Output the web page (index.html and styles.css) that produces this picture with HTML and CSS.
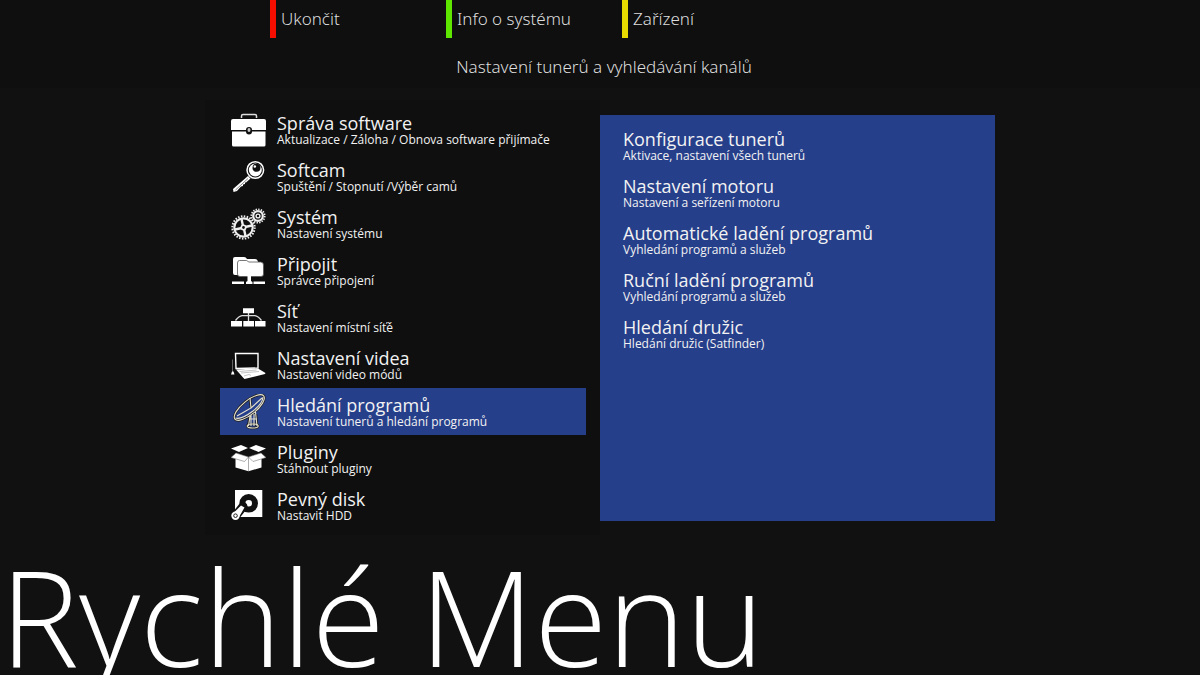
FILE: index.html
```html
<!DOCTYPE html>
<html lang="cs">
<head>
<meta charset="utf-8">
<title>Rychlé Menu</title>
<link rel="stylesheet" href="styles.css">
</head>
<body>
<header class="top">
  <div class="color-keys">
    <button class="key key-red" type="button">Ukončit</button>
    <button class="key key-green" type="button">Info o systému</button>
    <button class="key key-yellow" type="button">Zařízení</button>
  </div>
  <p class="hint">Nastavení tunerů a vyhledávání kanálů</p>
</header>
<main class="panels">
  <nav class="menu" aria-label="Rychlé Menu">
    <button class="item" type="button">
      <svg class="icon" viewBox="0 0 36 36" aria-hidden="true"><path d="M10.500 6V4q0-1.500 1.500-1.500h12q1.500 0 1.500 1.500v2" fill="none" stroke="#ddd" stroke-width="1.500"/><path fill="#fff" d="M2 7h31q2 0 2 2v9H21a3 3 0 0 0-6 0H0V9q0-2 2-2zM1 19.500h14a3 3 0 0 0 6 0h13.500V33q0 1.500-1.500 1.500H2.500Q1 34.500 1 33z"/><ellipse cx="18" cy="18" rx="1.500" ry="2" fill="#ccc"/></svg>
      <span class="text"><span class="name">Správa software</span><span class="desc">Aktualizace / Záloha / Obnova software přijímače</span></span>
    </button>
    <button class="item" type="button">
      <svg class="icon" viewBox="0 0 36 36" aria-hidden="true"><path d="M17 17L19.500 19.500L15 23.500L14 23.500L14 25L12 25.500L12 27L10 27.500L6 32L2.500 33L2 30z" fill="#fff"/><path d="M17 19.500L4.500 31" stroke="#333" stroke-width=".6"/><circle cx="24.300" cy="11" r="8.300" fill="#111" stroke="#fff" stroke-width="1.500"/><circle cx="24.300" cy="11" r="6.500" fill="#fff"/><circle cx="25.500" cy="8.800" r="4" fill="#111"/><circle cx="23.800" cy="7.500" r="1.300" fill="#fff"/></svg>
      <span class="text"><span class="name">Softcam</span><span class="desc">Spuštění / Stopnutí /Výběr camů</span></span>
    </button>
    <button class="item" type="button">
      <svg class="icon" viewBox="0 0 36 36" aria-hidden="true"><g fill="none" stroke="#eee"><circle cx="12.500" cy="21.500" r="11.200" stroke-width="2" stroke-dasharray="1.500 1.430"/><circle cx="12.500" cy="21.500" r="9.200" stroke-width="2.200"/><path d="M10.500 13L12 20M14.500 30L13 23M4 23.500L11 22M21 19.500L14 21" stroke-width="2.400"/><circle cx="12.500" cy="21.500" r="2.200" stroke-width="1.600"/><circle cx="27" cy="10" r="6.700" stroke-width="1.700" stroke-dasharray="1.400 1.230"/><circle cx="27" cy="10" r="4.800" stroke-width="2.200"/><circle cx="27" cy="10" r="1.900" stroke-width="1.400"/></g></svg>
      <span class="text"><span class="name">Systém</span><span class="desc">Nastavení systému</span></span>
    </button>
    <button class="item" type="button">
      <svg class="icon" viewBox="0 0 36 36" aria-hidden="true"><path fill="#fff" d="M4 4h9q2 0 3 2h8q2.500 0 3 3v13H4q-2 0-2-2V6q0-2 2-2z"/><path fill="#fff" stroke="#555" stroke-width=".8" d="M8.500 7.500h7q1 0 2 1.500h12q3 0 3 3v9q0 2.500-2.500 2.500H9q-2.500 0-2.500-2.500V10q0-2.500 2-2.500z"/><path fill="#fff" d="M1 28.500h12v2.500H1zM22.500 28.500h11.500v2.500H22.500zM16.500 23h3.500v5l1.500 1v2h-6.500v-2l1.500-1z"/></svg>
      <span class="text"><span class="name">Připojit</span><span class="desc">Správce připojení</span></span>
    </button>
    <button class="item" type="button">
      <svg class="icon" viewBox="0 0 36 36" aria-hidden="true"><path fill="#fff" d="M12 8.300h11v5H12zM0 21h11v5.500H0zM12.300 21h10.700v5.500H12.300zM24 21h10.500v5.500H24z"/><path d="M17.500 13v8M4.500 20.500Q8 16 11 15.700H24Q27 16 30.500 20.500" fill="none" stroke="#ddd" stroke-width="1.300"/></svg>
      <span class="text"><span class="name">Síť</span><span class="desc">Nastavení místní síťě</span></span>
    </button>
    <button class="item" type="button">
      <svg class="icon" viewBox="0 0 36 36" aria-hidden="true"><path d="M4.500 6.500L27 6.500L27 21L5 21.500z" fill="#0c0c0c" stroke="#fff" stroke-width="1.400"/><path fill="#fff" d="M5 22.500L27 21.500L34.500 26L34 27L13.500 32L12 30.500z"/><path d="M8.500 24.500L25.500 23M10 26L28 24.500M13 29L18 27.500L20 28.500" fill="none" stroke="#aaa" stroke-width=".7"/><path d="M1.500 12.500V25" stroke="#777" stroke-width=".8"/><path d="M0 27.500l1-3h1.500l1 3z" fill="#fff"/></svg>
      <span class="text"><span class="name">Nastavení videa</span><span class="desc">Nastavení video módů</span></span>
    </button>
    <button class="item item-active" type="button" aria-current="true">
      <svg class="icon" viewBox="0 0 36 36" aria-hidden="true"><g fill="none" stroke="#222" stroke-width="2.600"><ellipse cx="18.300" cy="13.500" rx="18.500" ry="7" transform="rotate(-39 18.300 13.500)"/><path d="M19 22L17 32M25 20L26 32M19 4L20 14"/><ellipse cx="21.700" cy="32" rx="5.500" ry="2"/></g><g fill="none" stroke="#e6e2d0" stroke-width="1.100"><ellipse cx="18.300" cy="13.500" rx="18.500" ry="7" transform="rotate(-39 18.300 13.500)"/><path d="M4.500 24Q10 26 22 17Q32 9 32 3M19 4L20 14L6 22M20 14L31 4M19 22L17.500 32M24.500 18L26 32M20 21v11M23 20v12M18 25h8"/><ellipse cx="21.700" cy="32" rx="5.500" ry="2"/></g></svg>
      <span class="text"><span class="name">Hledání programů</span><span class="desc">Nastavení tunerů a hledání programů</span></span>
    </button>
    <button class="item" type="button">
      <svg class="icon" viewBox="0 0 36 36" aria-hidden="true"><g fill="#fff"><path d="M0 7.500L10 4L17 7L8 11zM18 7L25 4L35 7.500L27.500 11z"/><path d="M4.500 12.500L17.500 16.500L30.500 12.500V26.500L17.500 30.300L4.500 26.500z"/></g><path d="M8 11.500L17.500 8L27.500 11.500L17.500 16z" fill="#111"/><g fill="#fff" stroke="#777" stroke-width=".6"><path d="M0 16.500L5 12L17.500 16L13.500 20.500zM17.500 16L30 12L35 16.500L22 20.500z"/><path d="M17.500 17v13"/></g></svg>
      <span class="text"><span class="name">Pluginy</span><span class="desc">Stáhnout pluginy</span></span>
    </button>
    <button class="item" type="button">
      <svg class="icon" viewBox="0 0 36 36" aria-hidden="true"><path fill="#fff" d="M4 2h27.300v27H4z"/><circle cx="17.700" cy="15.300" r="6.300" fill="#fff" stroke="#111" stroke-width="6"/><path d="M4.500 28L12 18.500" stroke="#111" stroke-width="9" stroke-linecap="round"/><path d="M2 25.500L10 17.500L13.500 19.500L7.500 30z" fill="#fff"/><circle cx="4.500" cy="27.700" r="4.200" fill="#fff"/><circle cx="4.500" cy="27.700" r="1.800" fill="#fff" stroke="#222"/></svg>
      <span class="text"><span class="name">Pevný disk</span><span class="desc">Nastavit HDD</span></span>
    </button>
  </nav>
  <section class="submenu" aria-label="Hledání programů">
    <button class="item" type="button"><span class="text"><span class="name">Konfigurace tunerů</span><span class="desc">Aktivace, nastavení všech tunerů</span></span></button>
    <button class="item" type="button"><span class="text"><span class="name">Nastavení motoru</span><span class="desc">Nastavení a seřízení motoru</span></span></button>
    <button class="item" type="button"><span class="text"><span class="name">Automatické ladění programů</span><span class="desc">Vyhledání programů a služeb</span></span></button>
    <button class="item" type="button"><span class="text"><span class="name">Ruční ladění programů</span><span class="desc">Vyhledání programů a služeb</span></span></button>
    <button class="item" type="button"><span class="text"><span class="name">Hledání družic</span><span class="desc">Hledání družic (Satfinder)</span></span></button>
  </section>
</main>
<h1 class="title">Rychlé Menu</h1>
</body>
</html>
```
FILE: styles.css
```css
* { box-sizing: border-box; }

body {
  margin: 0;
  height: 100vh;
  overflow: hidden;
  background: #111;
  color: #f2f2f2;
  font-family: "Open Sans", "Noto Sans", sans-serif;
}

button {
  margin: 0;
  border: 0;
  background: none;
  color: inherit;
  font: inherit;
  text-align: left;
}

.top {
  padding-bottom: 8px;
  background: #0f0f0f;
  color: #ddd;
  font-family: "Noto Sans", "Open Sans", sans-serif;
  font-size: 17px;
  font-weight: 300;
}

.color-keys {
  display: grid;
  grid-template-columns: repeat(3, 176px);
  padding-left: 270px;
}

.key {
  height: 38px;
  padding: 0 5px 2px;
  border-left: 6px solid;
  color: #ddd;
}

.key-red { border-left-color: #f60f00; }
.key-green { border-left-color: #5fe600; }
.key-yellow { border-left-color: #e6da00; }

.hint {
  margin: 16px 0 0;
  padding-left: 8px;
  line-height: 26px;
  text-align: center;
}

.panels {
  display: grid;
  grid-template-columns: 1fr 1fr;
  margin-top: 12px;
  padding: 0 205px;
}

.menu {
  display: flex;
  flex-direction: column;
  padding: 6px 14px 6px 15px;
  background: #0f0f0f;
}

.item {
  display: flex;
  gap: 10px;
  height: 47px;
  padding: 6px 11px;
}

.item-active { background: #263f8b; }

.icon {
  flex: none;
  width: 36px;
  height: 36px;
}

.text {
  display: flex;
  flex-direction: column;
  white-space: nowrap;
}

.name {
  font-size: 18px;
  line-height: 22px;
}

.desc {
  font-size: 12px;
  line-height: 12px;
}

.submenu {
  display: flex;
  flex-direction: column;
  margin: 15px 0 14px;
  padding: 7px 12px;
  background: #263f8b;
}

.title {
  margin: 0;
  color: #fff;
  font-size: 133px;
  font-weight: 300;
  line-height: 162px;
  white-space: nowrap;
}
```
